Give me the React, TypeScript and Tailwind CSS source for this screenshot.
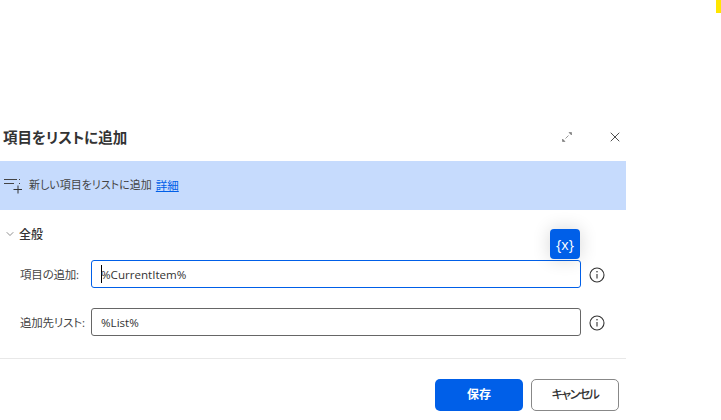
import { ChevronDown, X } from 'lucide-react'

const fontStack = "font-['Open_Sans','Noto_Sans_CJK_JP',sans-serif] [font-feature-settings:'palt']"

function InfoIcon() {
  return (
    <svg width="16" height="16" viewBox="0 0 16 16" fill="none" className="shrink-0">
      <circle cx="8" cy="8" r="7" stroke="#333" strokeWidth="1.1" />
      <path d="M8 7v4.5" stroke="#333" strokeWidth="1.1" />
      <circle cx="8" cy="4.8" r="0.8" fill="#333" />
    </svg>
  )
}

function ExpandIcon() {
  return (
    <svg width="12" height="12" viewBox="0 0 12 12" fill="none">
      <path d="M8 1.5h2.5v2.5z" fill="#777" stroke="#777" strokeWidth="0.6" />
      <path d="M1.5 8v2.5h2.5z" fill="#777" stroke="#777" strokeWidth="0.6" />
      <path d="M4.5 7.5l3-3" stroke="#999" strokeWidth="1" />
    </svg>
  )
}

function AddListIcon() {
  return (
    <svg width="18" height="16" viewBox="0 0 18 16" fill="none" className="shrink-0">
      <path d="M0 1.5h13M0 5.5h10" stroke="#444" strokeWidth="1" />
      <path d="M15 1h1v1h-1zM15 5h1v1h-1z" fill="#444" />
      <path d="M9.5 11.5h9M14 7.5v8" stroke="#333" strokeWidth="1" />
    </svg>
  )
}

function Field({ label, value, focused }: { label: string; value: string; focused?: boolean }) {
  return (
    <div className="flex items-center">
      <label className="w-[91px] pl-5 pt-[2px] text-[11.5px] tracking-[-0.2px] text-[#444] whitespace-nowrap">{label}</label>
      <div
        className={`flex h-[28px] w-[490px] items-center rounded-[3px] border bg-white pl-[9px] text-[11.6px] text-[#333] ${
          focused ? 'border-[#005fe8]' : 'border-[#666]'
        }`}
      >
        {focused && <span className="-mr-px h-[18px] w-px bg-black" />}
        <span className="pt-[2px]">{value}</span>
      </div>
      <div className="ml-2 pt-[2px]">
        <InfoIcon />
      </div>
    </div>
  )
}

export default function App() {
  return (
    <div className={`relative h-[420px] w-[721px] overflow-hidden bg-white ${fontStack}`}>
      <div className="absolute right-0 top-0 h-[13px] w-[5px] bg-[#ffe600]" />

      <div className="w-[626px] pt-[115px]">
        <div className="flex h-[46px] items-center justify-between pb-[2px] pl-[3px] pr-[3px]">
          <h1 className="pt-[2px] text-[14.5px] font-semibold text-[#333]">項目をリストに追加</h1>
          <div className="flex items-center gap-[34px]">
            <ExpandIcon />
            <X size={16} strokeWidth={1.3} className="text-[#333]" />
          </div>
        </div>

        <div className="flex h-[49px] items-center bg-[#c6dbfd] pl-1 text-[11px] text-[#444]">
          <AddListIcon />
          <span className="ml-[7px]">新しい項目をリストに追加</span>
          <a className="ml-1 text-[11.5px] text-[#005fe8] underline">詳細</a>
        </div>

        <div className="flex items-center pl-[4px] pt-[15px] text-xs font-medium text-[#333]">
          <ChevronDown size={12} strokeWidth={1.2} className="text-[#444]" />
          <span className="ml-[3px] pt-[2px]">全般</span>
        </div>

        <div className="flex flex-col gap-[20px] pt-[17px]">
          <Field label="項目の追加:" value="%CurrentItem%" focused />
          <Field label="追加先リスト:" value="%List%" />
        </div>

        <div className="mt-[22px] border-t border-[#e8e8e8]" />

        <div className="flex justify-end gap-2 pr-[7px] pt-[20px]">
          <button className="h-[32px] w-[88px] rounded-[5px] bg-[#005fe8] text-xs font-semibold text-white">
            保存
          </button>
          <button className="h-[32px] w-[88px] rounded-[5px] border border-[#888] bg-white text-xs font-medium tracking-[-1.5px] text-[#333]">
            キャンセル
          </button>
        </div>
      </div>

      <div className="absolute left-[550px] top-[229px] flex h-[30px] w-[30px] items-center justify-center rounded-[4px] bg-[#005fe8] text-[14px] text-white shadow-[0_0_18px_rgba(0,0,0,0.16)]">
        {'{x}'}
      </div>
    </div>
  )
}
